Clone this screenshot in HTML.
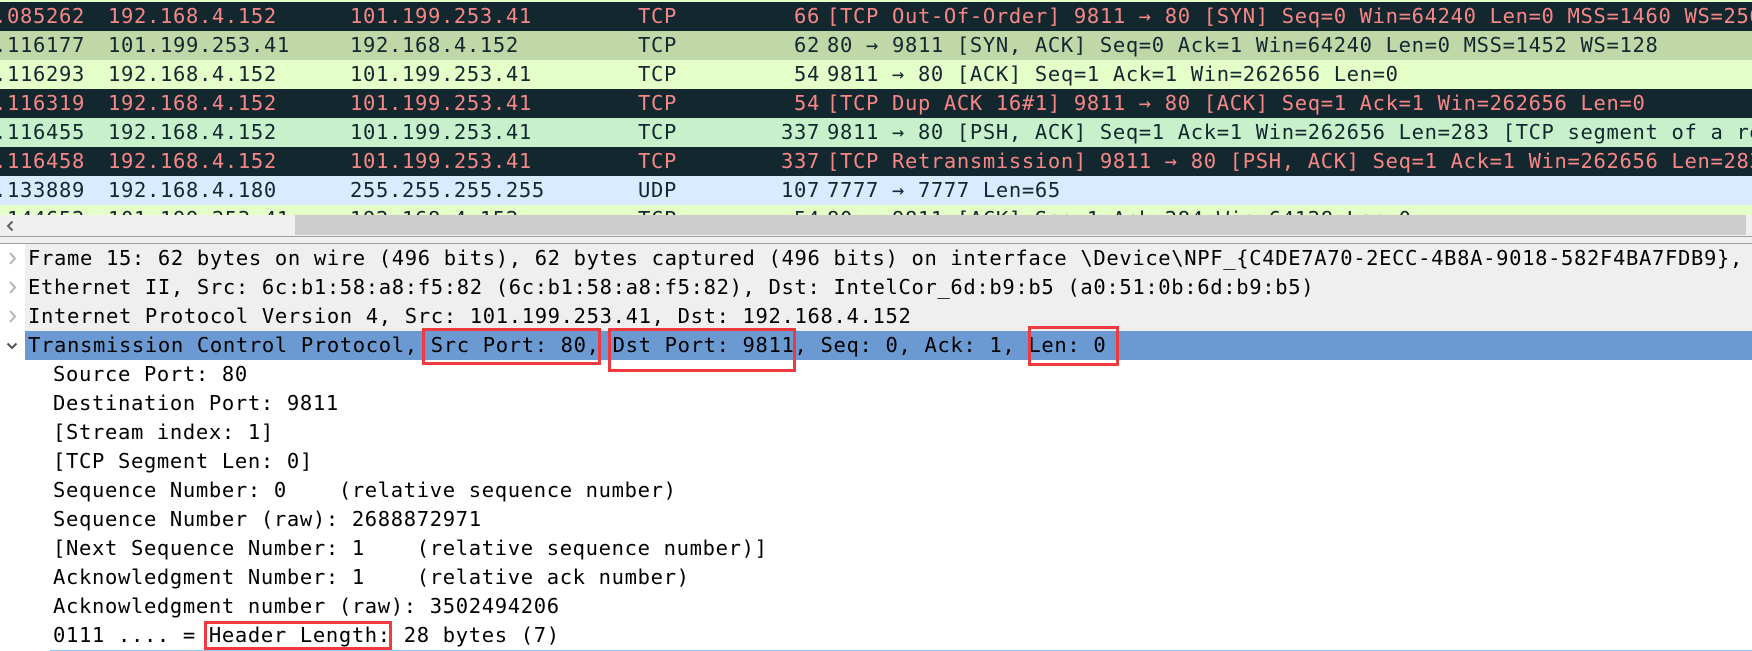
<!DOCTYPE html>
<html>
<head>
<meta charset="utf-8">
<style>
html,body{margin:0;padding:0;background:#fff;}
#p{position:relative;width:1752px;height:651px;overflow:hidden;background:#fff;font-family:"DejaVu Sans Mono","Liberation Mono",monospace;font-size:20.5px;letter-spacing:.65px;}
.r{position:absolute;left:0;width:1752px;height:29px;overflow:hidden;}
.r span{position:absolute;top:0;line-height:29px;white-space:pre;}
.d{background:#12272e;color:#f78787;}
.l{color:#12272e;}
.t{left:-6px}.s{left:108px}.e{left:350px}.p{left:638px}
.n{right:932px;}
.i{left:827px}
.x{position:absolute;white-space:pre;line-height:29px;height:29px;color:#000;}
.c{left:53px}
.box{position:absolute;border:3px solid #ef3b3f;box-sizing:border-box;}
</style>
</head>
<body>
<div id="p">
<div class="r" style="top:0;height:2px;background:#e4ffc7"></div>

<div class="r d" style="top:2px"><span class="t">.085262</span><span class="s">192.168.4.152</span><span class="e">101.199.253.41</span><span class="p">TCP</span><span class="n">66</span><span class="i">[TCP Out-Of-Order] 9811 → 80 [SYN] Seq=0 Win=64240 Len=0 MSS=1460 WS=256 SACK_PERM</span></div>
<div class="r l" style="top:31px;background:#c0d8a8"><span class="t">.116177</span><span class="s">101.199.253.41</span><span class="e">192.168.4.152</span><span class="p">TCP</span><span class="n">62</span><span class="i">80 → 9811 [SYN, ACK] Seq=0 Ack=1 Win=64240 Len=0 MSS=1452 WS=128</span></div>
<div class="r l" style="top:60px;background:#e4ffc7"><span class="t">.116293</span><span class="s">192.168.4.152</span><span class="e">101.199.253.41</span><span class="p">TCP</span><span class="n">54</span><span class="i">9811 → 80 [ACK] Seq=1 Ack=1 Win=262656 Len=0</span></div>
<div class="r d" style="top:89px"><span class="t">.116319</span><span class="s">192.168.4.152</span><span class="e">101.199.253.41</span><span class="p">TCP</span><span class="n">54</span><span class="i">[TCP Dup ACK 16#1] 9811 → 80 [ACK] Seq=1 Ack=1 Win=262656 Len=0</span></div>
<div class="r l" style="top:118px;background:#c8f1cb"><span class="t">.116455</span><span class="s">192.168.4.152</span><span class="e">101.199.253.41</span><span class="p">TCP</span><span class="n">337</span><span class="i">9811 → 80 [PSH, ACK] Seq=1 Ack=1 Win=262656 Len=283 [TCP segment of a reassembled PDU]</span></div>
<div class="r d" style="top:147px"><span class="t">.116458</span><span class="s">192.168.4.152</span><span class="e">101.199.253.41</span><span class="p">TCP</span><span class="n">337</span><span class="i">[TCP Retransmission] 9811 → 80 [PSH, ACK] Seq=1 Ack=1 Win=262656 Len=283</span></div>
<div class="r l" style="top:176px;background:#d8ebff"><span class="t">.133889</span><span class="s">192.168.4.180</span><span class="e">255.255.255.255</span><span class="p">UDP</span><span class="n">107</span><span class="i">7777 → 7777 Len=65</span></div>
<div class="r l" style="top:205px;height:10px;background:#e4ffc7"><span class="t">.144652</span><span class="s">101.199.253.41</span><span class="e">192.168.4.152</span><span class="p">TCP</span><span class="n">54</span><span class="i">80 → 9811 [ACK] Seq=1 Ack=284 Win=64128 Len=0</span></div>

<!-- scrollbar -->
<div style="position:absolute;left:0;top:215px;width:1752px;height:21px;background:#f0f0f0"></div>
<div style="position:absolute;left:295px;top:215px;width:1451px;height:20px;background:#cdcdcd"></div>
<svg style="position:absolute;left:0;top:215px" width="20" height="20"><path d="M12.5 6.5 L8 11 L12.5 15.5" fill="none" stroke="#606060" stroke-width="2"/></svg>
<div style="position:absolute;left:0;top:236px;width:1752px;height:1px;background:#a0a0a0"></div>
<div style="position:absolute;left:0;top:237px;width:1752px;height:6px;background:#f0f0f0"></div>
<div style="position:absolute;left:0;top:243px;width:1752px;height:1px;background:#a0a0a0"></div>

<!-- details -->
<div style="position:absolute;left:25px;top:244px;width:1727px;height:87px;background:#efefef"></div>
<div style="position:absolute;left:25px;top:331px;width:1727px;height:29px;background:#6b9ad2"></div>

<svg style="position:absolute;left:0;top:244px" width="25" height="116">
<g fill="none" stroke="#b4b4b4" stroke-width="2">
<path d="M10 9 L15 14.5 L10 20"/>
<path d="M10 38 L15 43.5 L10 49"/>
<path d="M10 67 L15 72.5 L10 78"/>
</g>
<path d="M7.5 99.5 L12 104 L16.5 99.5" fill="none" stroke="#505050" stroke-width="2"/>
</svg>

<div class="x" style="left:28px;top:244px;">Frame 15: 62 bytes on wire (496 bits), 62 bytes captured (496 bits) on interface \Device\NPF_{C4DE7A70-2ECC-4B8A-9018-582F4BA7FDB9},</div>
<div class="x" style="left:28px;top:273px;">Ethernet II, Src: 6c:b1:58:a8:f5:82 (6c:b1:58:a8:f5:82), Dst: IntelCor_6d:b9:b5 (a0:51:0b:6d:b9:b5)</div>
<div class="x" style="left:28px;top:302px;">Internet Protocol Version 4, Src: 101.199.253.41, Dst: 192.168.4.152</div>
<div class="x" style="left:28px;top:331px;">Transmission Control Protocol, Src Port: 80, Dst Port: 9811, Seq: 0, Ack: 1, Len: 0</div>
<div class="x c" style="top:360px;">Source Port: 80</div>
<div class="x c" style="top:389px;">Destination Port: 9811</div>
<div class="x c" style="top:418px;">[Stream index: 1]</div>
<div class="x c" style="top:447px;">[TCP Segment Len: 0]</div>
<div class="x c" style="top:476px;">Sequence Number: 0    (relative sequence number)</div>
<div class="x c" style="top:505px;">Sequence Number (raw): 2688872971</div>
<div class="x c" style="top:534px;">[Next Sequence Number: 1    (relative sequence number)]</div>
<div class="x c" style="top:563px;">Acknowledgment Number: 1    (relative ack number)</div>
<div class="x c" style="top:592px;">Acknowledgment number (raw): 3502494206</div>
<div class="x c" style="top:621px;">0111 .... = Header Length: 28 bytes (7)</div>
<div style="position:absolute;left:50px;top:650px;width:1702px;height:1px;background:#90c8f6"></div>

<!-- red boxes -->
<div class="box" style="left:422px;top:328px;width:179px;height:37px"></div>
<div class="box" style="left:608px;top:328px;width:188px;height:44px"></div>
<div class="box" style="left:1028px;top:326px;width:91px;height:40px"></div>
<div class="box" style="left:204px;top:621px;width:188px;height:29px"></div>
</div>
</body>
</html>
